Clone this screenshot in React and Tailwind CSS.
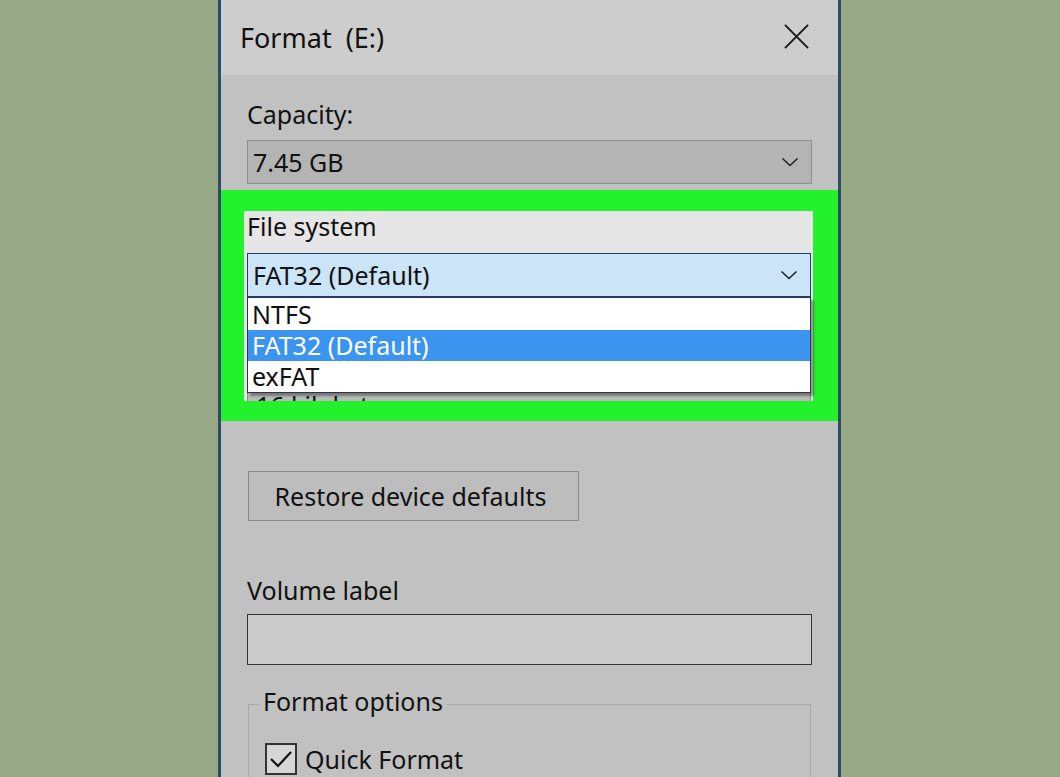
import React from "react";

const Chevron = () => (
  <svg width="18" height="12" viewBox="0 0 18 12" className="shrink-0">
    <path d="M1.5 2.5 L9 9.5 L16.5 2.5" fill="none" stroke="#222" strokeWidth="1.6" />
  </svg>
);

const Combo = ({ value, className = "" }) => (
  <div
    className={`flex items-center justify-between h-[44px] pl-[5px] pr-[12px] border ${className}`}
  >
    <span>{value}</span>
    <Chevron />
  </div>
);

export default function App() {
  return (
    <div
      className="w-[1060px] h-[777px] overflow-hidden bg-[#97a886] text-[#111] text-[25px] leading-none"
      style={{ fontFamily: '"Noto Sans", "Open Sans", sans-serif' }}
    >
      <div className="ml-[218px] w-[623px] h-full flex flex-col border-l-[3px] border-r-[3px] border-l-[#2d4a66] border-r-[#2d4a66] bg-[#c1c1c1]">
        {/* title bar */}
        <div className="h-[75px] shrink-0 flex items-center justify-between pl-[18px] pr-[27px] bg-[#cdcdcd] border-l border-r border-[#b8d2ea]">
          <span className="text-[27px] whitespace-pre">Format  (E:)</span>
          <svg width="27" height="27" viewBox="0 0 28 28" className="-mt-[3px]">
            <path d="M2 2 L26 26 M26 2 L2 26" stroke="#1a1a1a" strokeWidth="2" />
          </svg>
        </div>

        <div className="flex flex-col">
          {/* capacity */}
          <div className="px-[26px] pt-[25px]">
            <div className="h-[28px] flex items-center">Capacity:</div>
            <Combo
              value="7.45 GB"
              className="mt-[12px] bg-[#b4b4b4] border-[#8c8c8c]"
            />
          </div>

          {/* highlighted file system block */}
          <div className="mt-[6px] h-[231px] bg-[#22f22c] pt-[21px] pl-[23px] pr-[25px]">
            <div className="relative h-[190px] bg-[#e6e6e6] pl-[3px] pr-[2px]">
              <div className="h-[34px] flex items-center pb-[4px]">File system</div>
              <Combo
                value="FAT32 (Default)"
                className="mt-[8px] bg-[#cce4f7] border-[#1f3d6e]"
              />
              {/* allocation combo, mostly hidden behind the list */}
              <div className="mt-[96px] h-[8px] overflow-hidden bg-[#b9b9b9] border-l border-r border-[#8c8c8c] pl-[8px]">
                <div>16 kilobytes</div>
              </div>
              {/* dropdown list */}
              <div className="absolute left-[3px] right-[2px] top-[86px] bg-white border border-[#2a3550] shadow-[3px_3px_2px_rgba(0,0,0,0.35)]">
                <div className="h-[32px] flex items-center pl-[4px]">NTFS</div>
                <div className="h-[31px] flex items-center pl-[4px] bg-[#3a94f0] text-white">
                  FAT32 (Default)
                </div>
                <div className="h-[31px] flex items-center pl-[4px]">exFAT</div>
              </div>
            </div>
          </div>

          {/* restore button */}
          <div className="px-[27px] pt-[50px]">
            <button className="w-[331px] h-[50px] bg-[#bdbdbd] border border-[#8a8a8a] text-[25px] pr-[6px]">
              Restore device defaults
            </button>
          </div>

          {/* volume label */}
          <div className="px-[26px] pt-[55px]">
            <div className="h-[28px] flex items-center">Volume label</div>
            <div className="mt-[10px] h-[51px] bg-[#cbcbcb] border border-[#333]" />
          </div>

          {/* format options */}
          <div className="relative mx-[27px] mt-[39px] border border-[#a9a9a9] h-[120px] px-[16px] pt-[38px]">
            <span className="absolute left-[10px] top-[-16px] px-[4px] bg-[#c1c1c1]">
              Format options
            </span>
            <div className="flex items-center gap-[8px]">
              <div className="w-[32px] h-[32px] border-2 border-[#333] bg-[#d6d6d6] flex items-center justify-center">
                <svg width="24" height="20" viewBox="0 0 24 20">
                  <path d="M2 10 L9 17 L22 3" fill="none" stroke="#111" strokeWidth="2.2" />
                </svg>
              </div>
              <span>Quick Format</span>
            </div>
          </div>
        </div>
      </div>
    </div>
  );
}
